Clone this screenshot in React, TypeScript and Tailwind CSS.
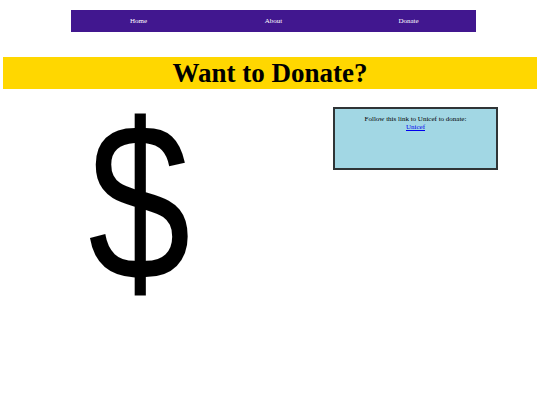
export default function App() {
  const serif = { fontFamily: '"Liberation Serif", "Times New Roman", serif' };
  return (
    <div className="w-[540px] h-[405px] bg-white overflow-hidden" style={serif}>
      <nav className="ml-[71px] mt-[10px] w-[405px] h-[22px] bg-[#41178f] flex items-center text-white text-[7px]">
        <a className="flex-1 text-center">Home</a>
        <a className="flex-1 text-center">About</a>
        <a className="flex-1 text-center">Donate</a>
      </nav>

      <header className="mx-[3px] mt-[25px] h-[32px] bg-[#ffd700] flex items-center justify-center">
        <h1 className="text-[27px] font-bold leading-none text-black">Want to Donate?</h1>
      </header>

      <main className="flex items-start mt-[18px]">
        <div className="ml-[88px] w-[100px] overflow-visible">
          <div
            className="text-[225px] leading-[190px] text-black origin-left scale-x-[0.82]"
            style={{ fontFamily: '"Liberation Sans", Arial, sans-serif' }}
          >
            $
          </div>
        </div>
        <section className="ml-auto mr-[42px] w-[165px] h-[63px] border-2 border-[#2f3436] bg-[#a2d7e4] text-center text-[7px] leading-[8px] pt-[6px]">
          <p>Follow this link to Unicef to donate:</p>
          <a href="#" className="text-[#0000ee] underline">Unicef</a>
        </section>
      </main>
    </div>
  );
}
